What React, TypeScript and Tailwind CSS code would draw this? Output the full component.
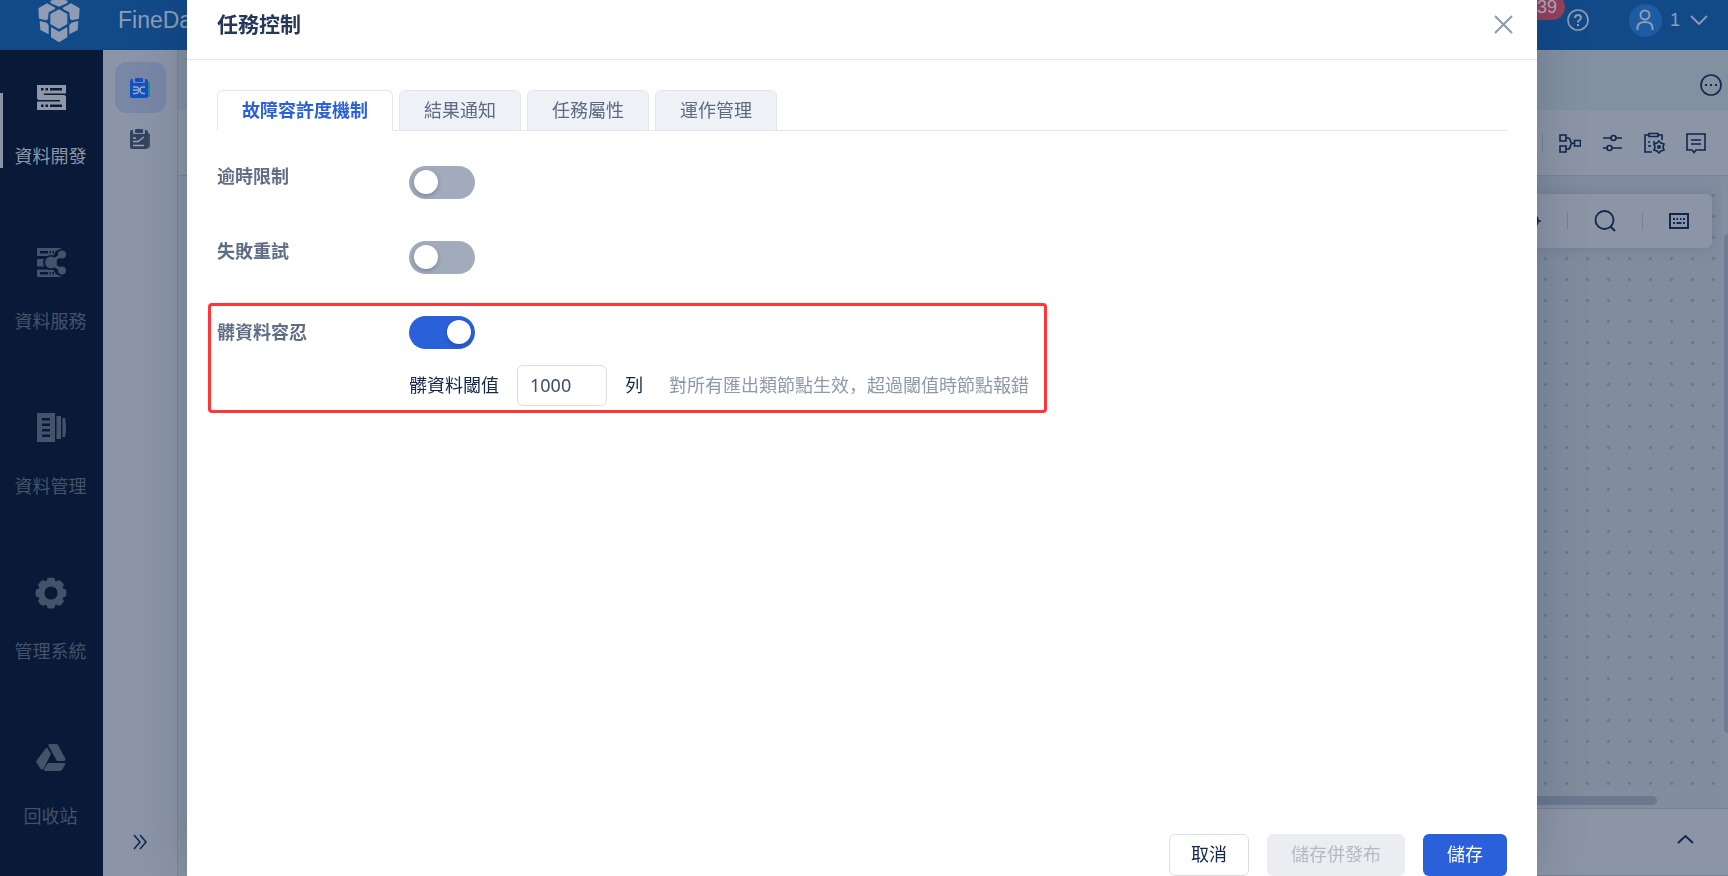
import { useState } from "react";
import type { ReactNode } from "react";
import { clsx } from "clsx";

const navItems = [
  { label: "資料開發", icon: <DevelopIcon /> },
  { label: "資料服務", icon: <ServiceIcon /> },
  { label: "資料管理", icon: <ManageIcon /> },
  { label: "管理系統", icon: <GearIcon /> },
  { label: "回收站", icon: <RecycleIcon /> },
];

const tabs = ["故障容許度機制", "結果通知", "任務屬性", "運作管理"];

function LogoIcon() {
  return (
    <svg width="42" height="46" viewBox="23 -8 126 138" fill="currentColor" className="shrink-0">
      <path d="M86 -8 113 5 110 11 86 21 62 11 59 5Z" />
      <path d="M24 26 50 11 75 24 73 29 55 38 53 58 48 62 26 57Z" />
      <path d="M148 26 122 11 97 24 99 29 117 38 119 58 124 62 146 57Z" />
      <path d="M86 29 111 43V73L86 88 60 73V43Z" />
      <path d="M28 64 49 69 55 77V104L30 91Z" />
      <path d="M144 64 123 69 117 77V104L142 91Z" />
      <path d="M62 82 86 96 111 82V113L86 128 62 113Z" />
    </svg>
  );
}

function DevelopIcon() {
  return (
    <svg width="30" height="30" viewBox="0 0 30 30" fill="currentColor" fillRule="evenodd">
      <path d="M1 2H30V10.500H8V12H28Q30 12 30 14V27H1V18.500H24V17H3Q1 17 1 15ZM5 5V7.500H7.500V5ZM9.500 5V7.500H12V5ZM14 5V7.500H26V5ZM5 21.500V24H7.500V21.500ZM9.500 21.500V24H12V21.500ZM14 21.500V24H26V21.500Z" />
    </svg>
  );
}

function ServiceIcon() {
  return (
    <svg width="30" height="30" viewBox="0 0 30 30" fill="currentColor" fillRule="evenodd">
      <path d="M1 0H26L20 3 17 8H1ZM4 3V5.500H12V3ZM13.500 3V5.500H15V3ZM16.500 3V5.500H18V3Z" />
      <path d="M1 11H8L7 15 8 18.500H1Z" />
      <path d="M1 21.500H17L20 26 26 29H1ZM4 24V26.500H12V24ZM13.500 24V26.500H15V24ZM16.500 24V26.500H18V24Z" />
      <circle cx="15" cy="14.500" r="7.500" fill="#081a37" />
      <circle cx="15" cy="14.500" r="6" />
      <circle cx="26" cy="6.500" r="4" />
      <circle cx="26" cy="22.500" r="4" />
      <path d="M15 14 26 6.500M15 15 26 22.500" stroke="currentColor" strokeWidth="3" />
    </svg>
  );
}

function ManageIcon() {
  return (
    <svg width="30" height="30" viewBox="0 0 30 30" fill="currentColor" fillRule="evenodd">
      <path d="M1 0H19V29H1ZM6 5V7.500H14V5ZM6 10.500V13H14V10.500ZM6 16V18.500H14V16ZM6 21.500V24H14V21.500Z" />
      <path d="M20.500 3H25V26H20.500ZM26.500 5H29Q31 15 29 24H26.500Z" />
    </svg>
  );
}

function GearIcon() {
  const teeth = [0, 45, 90, 135, 180, 225, 270, 315];
  return (
    <svg width="32" height="32" viewBox="0 0 32 32" fill="currentColor">
      <circle cx="16" cy="16" r="9.800" fill="none" stroke="currentColor" strokeWidth="6.400" />
      {teeth.map((deg) => (
        <path key={deg} d="M11.500 5 12.500 1Q16 0 19.500 1L20.500 5Z" transform={`rotate(${deg} 16 16)`} />
      ))}
    </svg>
  );
}

function RecycleIcon() {
  return (
    <svg width="30" height="28" viewBox="0 0 30 28" fill="currentColor">
      <path d="M12 1Q13 0 14 0H20Q21 0 22 1L29 14Q30 17 28 17H21Z" />
      <path d="M10 4Q11 3 12 5L15 10 8 24Q6 27 4 24L0 18 1 16Z" />
      <path d="M12 19H28Q30 19 29 21L26 26Q25 27 24 27H9Q8 27 8 25Z" />
    </svg>
  );
}

function TaskIcon({ active }: { active?: boolean }) {
  return (
    <svg width="20" height="20" viewBox="0 0 20 20">
      <rect x="8" y="4" width="12" height="15" rx="2" fill={active ? "#1b8c8e" : "#3b4c68"} />
      <rect x="0" y="1" width="18" height="19" rx="2" fill={active ? "#1450c0" : "#33435f"} />
      <rect x="3" y="0" width="12" height="5" rx="1" fill={active ? "#7987a7" : "#8a93a5"} />
      <rect x="5" y="0" width="8" height="4" rx="1" fill={active ? "#1450c0" : "#33435f"} />
      {active ? (
        <path d="M3 9H6Q9 9 9 12T6 15.500H3M15 9H13Q10 9 10 12T13 15.500H15M3 12H8" fill="none" stroke="#9aa9cc" strokeWidth="1.300" />
      ) : (
        <path d="M3 12.500H8L14 8M3 16.500H14M3 9H6" fill="none" stroke="#9aa3b3" strokeWidth="1.400" />
      )}
    </svg>
  );
}

function LineIcon({ children, size = 22 }: { children: ReactNode; size?: number }) {
  return (
    <svg width={size} height={size} viewBox={`0 0 ${size} ${size}`} fill="none" stroke="currentColor" strokeWidth="1.600">
      {children}
    </svg>
  );
}

function IconButton({ label, children }: { label: string; children: ReactNode }) {
  return (
    <button type="button" aria-label={label} className="flex cursor-pointer items-center justify-center">
      {children}
    </button>
  );
}

function Header() {
  return (
    <header className="relative flex h-[50px] items-center overflow-hidden bg-[#124a88] pb-[10px] pl-[38px] pr-5 text-[#8e9db5]">
      <LogoIcon />
      <span className="ml-[38px] font-[Liberation_Sans,sans-serif] text-[23px]">FineData</span>
      <div className="ml-auto flex items-center">
        <span className="mb-[26px] mr-[2px] flex h-[26px] w-14 items-center justify-end rounded-full bg-[#93415a] pr-2 font-[Liberation_Sans,sans-serif] text-lg leading-5 text-[#a9a9bb]">
          39
        </span>
        <IconButton label="幫助">
          <LineIcon size={22}>
            <circle cx="11" cy="11" r="10" />
            <path d="M8 9Q8 6 11 6T14 8.500Q14 10 12.500 11 11 12 11 13.500M11 15V17" strokeWidth="2" />
          </LineIcon>
        </IconButton>
        <button type="button" className="ml-10 flex cursor-pointer items-center">
          <span className="flex size-[33px] items-center justify-center rounded-full bg-[#1d5ca3]">
            <svg width="18" height="22" viewBox="0 0 18 22" fill="none" stroke="currentColor" strokeWidth="2">
              <circle cx="9" cy="6" r="4.500" />
              <path d="M1.500 21V19Q1.500 13 9 13T16.500 19V21" />
            </svg>
          </span>
          <span className="ml-2 font-[Liberation_Sans,sans-serif] text-lg">1</span>
          <svg width="18" height="10" viewBox="0 0 18 10" fill="none" stroke="currentColor" strokeWidth="1.800" className="ml-[10px]">
            <path d="M1 1 9 9 17 1" />
          </svg>
        </button>
      </div>
    </header>
  );
}

function Sidebar() {
  return (
    <nav className="w-[103px] shrink-0 bg-[#081a37]">
      {navItems.map((item, i) => (
        <a
          key={item.label}
          href="#"
          className={clsx(
            "relative flex h-[165px] flex-col items-center pr-[2px] pt-[33px] text-lg leading-7",
            i === 0 ? "text-[#8e97a8]" : "text-[#44526a]"
          )}
        >
          {i === 0 && <span className="absolute left-0 top-[43px] h-[75px] w-[3px] bg-[#8a93a5]" />}
          <span className="flex h-[30px] items-center">{item.icon}</span>
          <span className="mt-[29px]">{item.label}</span>
        </a>
      ))}
    </nav>
  );
}

function SubSidebar() {
  return (
    <aside className="flex w-[75px] shrink-0 flex-col items-center border-r border-[#7a8697] bg-[#8c95a7] pb-[26px] pt-3 text-[#122a52]">
      <button type="button" aria-label="資料開發" className="flex size-[51px] cursor-pointer items-center justify-center rounded-xl bg-[#7987a7]">
        <TaskIcon active />
      </button>
      <button type="button" aria-label="任務運作" className="flex size-[51px] cursor-pointer items-center justify-center">
        <TaskIcon />
      </button>
      <button type="button" aria-label="展開" className="mt-auto cursor-pointer">
        <svg width="16" height="16" viewBox="0 0 16 16" fill="none" stroke="currentColor" strokeWidth="1.600">
          <path d="M2 1 8 8 2 15M8 1 14 8 8 15" />
        </svg>
      </button>
    </aside>
  );
}

function Toolbar() {
  return (
    <div className="flex h-[66px] shrink-0 items-center justify-end gap-5 border-b border-[#798597] bg-[#8c95a6] pr-[21px]">
      <span className="mr-[-4px] h-5 w-px bg-[#758296]" />
      <IconButton label="節點">
        <LineIcon>
          <path d="M1 3H7V9H1ZM1 14H7V20H1ZM15.500 8.500H21.500V14H15.500ZM7 6H9Q11 6 11.500 9T14 11.200H15.500M7 17H9Q11 17 11.500 14T14 11.200" />
        </LineIcon>
      </IconButton>
      <IconButton label="參數">
        <LineIcon>
          <path d="M2 6H10M15 6H21M2 16H6M11 16H21" />
          <circle cx="12.500" cy="6" r="2.500" />
          <circle cx="8.500" cy="16" r="2.500" />
        </LineIcon>
      </IconButton>
      <IconButton label="任務控制">
        <LineIcon>
          <path d="M6 3H2V20H9M15 3H19V8M6 1.500H15V4.500H6ZM5 10H7M10 10H12M5 14H8" />
          <path d="M16 9 18 11 21 12 20 15 21 18 18 19 16 21 14 19 11 18 12 15 11 12 14 11Z" />
          <circle cx="16" cy="15" r="1.200" />
        </LineIcon>
      </IconButton>
      <IconButton label="備註">
        <LineIcon>
          <path d="M2 2H20V18H11L9 20.500 7 18H2ZM6 8H16M6 12H16" />
        </LineIcon>
      </IconButton>
    </div>
  );
}

function Workspace() {
  return (
    <main className="flex min-w-0 flex-1 flex-col bg-[#828e9e] text-[#102750]">
      <div className="flex h-[60px] shrink-0 items-center justify-end bg-[#8390a0] pr-[6px] pt-[10px]">
        <IconButton label="更多">
          <LineIcon>
            <circle cx="11" cy="11" r="10" />
            <path d="M5 11H7M10 11H12M15 11H17" strokeWidth="2" />
          </LineIcon>
        </IconButton>
      </div>
      <Toolbar />
      <div className="flex min-h-0 flex-1">
        {/* Component list */}
        <div className="w-60 shrink-0 bg-[#8792a2]" />
        <div className="flex min-w-0 flex-1 flex-col">
          <div className="flex min-h-0 flex-1">
            <div className="flex min-w-0 flex-1 flex-col">
              <div className="flex-1 bg-[#818c9f] bg-[radial-gradient(circle,#6b788c_1px,transparent_2px)] bg-[length:21px_21px] bg-[position:4px_9px] pl-4 pr-[9px] pt-[18px]">
                <div className="flex h-[54px] items-center justify-end gap-[26px] rounded-md bg-[#8c95a6] pr-[23px] shadow-[0_0_12px_rgba(80,98,125,0.35)]">
                  <IconButton label="定位">
                    <LineIcon>
                      <circle cx="11" cy="11" r="8" />
                      <path d="M16 11H22M11 0V6M11 16V22M0 11H6" />
                    </LineIcon>
                  </IconButton>
                  <span className="h-[18px] w-px bg-[#758296]" />
                  <IconButton label="搜尋">
                    <LineIcon>
                      <circle cx="10.500" cy="10" r="9" strokeWidth="1.800" />
                      <path d="M16.500 16.500 21 21" strokeWidth="2" />
                    </LineIcon>
                  </IconButton>
                  <span className="h-[18px] w-px bg-[#758296]" />
                  <IconButton label="快捷鍵">
                    <LineIcon size={20}>
                      <path d="M1 3H19V17H1Z" strokeWidth="2" />
                      <path d="M4 8H6M7.500 8H9M11 8H12.500M14 8H16M4 12H6M7.500 12H12.500M14 12H16" strokeWidth="2" />
                    </LineIcon>
                  </IconButton>
                </div>
              </div>
              <div className="h-[19px] pr-[64px] pt-[7px]">
                <div className="h-[9px] rounded-full bg-[#6b7890]" />
              </div>
            </div>
            <div className="flex w-[7px] justify-end bg-[#838e9f] pb-[75px] pt-[58px]">
              <div className="w-1 rounded-l bg-[#6f7c93]" />
            </div>
          </div>
          <div className="flex h-[68px] shrink-0 items-center justify-end border-y border-[#758296] bg-[#8c95a6] pb-[6px] pr-[34px]">
            <IconButton label="展開">
              <svg width="17" height="10" viewBox="0 0 17 10" fill="none" stroke="currentColor" strokeWidth="2">
                <path d="M1 9 8.500 2 16 9" />
              </svg>
            </IconButton>
          </div>
        </div>
      </div>
    </main>
  );
}

function Switch({ id, checked, onChange }: { id: string; checked: boolean; onChange: (value: boolean) => void }) {
  return (
    <span className="relative flex h-[33px] w-[66px] shrink-0">
      <input
        id={id}
        type="checkbox"
        role="switch"
        checked={checked}
        onChange={(e) => onChange(e.target.checked)}
        className="peer h-full w-full cursor-pointer appearance-none rounded-full bg-[#a2abbc] checked:bg-[#2b60db]"
      />
      <span className="pointer-events-none absolute left-[5px] top-1 size-6 rounded-full bg-white shadow-[0_2px_4px_rgba(0,30,60,0.25)] peer-checked:left-[38px]" />
    </span>
  );
}

function TaskControlDialog() {
  const [activeTab, setActiveTab] = useState(tabs[0]);
  const [timeLimit, setTimeLimit] = useState(false);
  const [retry, setRetry] = useState(false);
  const [dirty, setDirty] = useState(true);
  const [threshold, setThreshold] = useState("1000");

  return (
    <div role="dialog" aria-label="任務控制" className="flex w-full flex-col bg-white shadow-[0_0_50px_rgba(8,26,55,0.2)]">
      <div className="flex h-[60px] items-center justify-between border-b border-[#e3e6ee] pb-[10px] pl-[30px] pr-6">
        <h1 className="text-[21px] font-bold text-[#26375a]">任務控制</h1>
        <button type="button" aria-label="關閉" className="cursor-pointer text-[#8f99ab]">
          <svg width="19" height="19" viewBox="0 0 19 19" fill="none" stroke="currentColor" strokeWidth="2">
            <path d="M1 1 18 18M18 1 1 18" />
          </svg>
        </button>
      </div>

      <div className="flex-1 px-[30px] pt-[30px]">
        <div role="tablist" className="flex gap-[6px] border-b border-[#e3e6ee]">
          {tabs.map((tab) => (
            <button
              key={tab}
              type="button"
              role="tab"
              aria-selected={tab === activeTab}
              onClick={() => setActiveTab(tab)}
              className={clsx(
                "-mb-px h-[41px] cursor-pointer rounded-t-md border border-[#e3e6ee] px-6 pb-[2px] text-lg",
                tab === activeTab ? "border-b-white bg-white font-bold text-[#2b60db]" : "bg-[#eef1f6] text-[#5c6a84]"
              )}
            >
              {tab}
            </button>
          ))}
        </div>

        <div className="mt-[35px] flex h-[75px]">
          <label htmlFor="time-limit" className="w-48 text-lg leading-5 font-bold text-[#5f6d86]">逾時限制</label>
          <Switch id="time-limit" checked={timeLimit} onChange={setTimeLimit} />
        </div>
        <div className="flex h-[62px]">
          <label htmlFor="retry" className="w-48 text-lg leading-5 font-bold text-[#5f6d86]">失敗重試</label>
          <Switch id="retry" checked={retry} onChange={setRetry} />
        </div>

        {/* Dirty data tolerance */}
        <div className="-ml-[9px] h-[110px] w-[839px] rounded-[4px] border-3 border-[#fd3636] pl-[6px] pt-[10px]">
          <div className="flex items-center">
            <label htmlFor="dirty" className="w-48 pb-[2px] text-lg font-bold text-[#5f6d86]">髒資料容忍</label>
            <Switch id="dirty" checked={dirty} onChange={setDirty} />
          </div>
          <div className="ml-48 mt-4 flex items-center text-lg text-[#102750]">
            <label htmlFor="threshold" className="pb-[2px]">髒資料閾值</label>
            <input
              id="threshold"
              type="text"
              value={threshold}
              onChange={(e) => setThreshold(e.target.value)}
              className="ml-[18px] h-[41px] w-[90px] rounded-md border border-[#dadee7] px-3 pb-[2px] text-[#3d4d6b]"
            />
            <span className="ml-[18px] pb-[2px]">列</span>
            <span className="ml-[26px] pb-[2px] text-[#8f99ab]">對所有匯出類節點生效，超過閾值時節點報錯</span>
          </div>
        </div>
      </div>

      <div className="flex justify-end gap-[18px] px-[30px] text-lg">
        <button type="button" className="h-[42px] w-20 cursor-pointer rounded-md border border-[#d9dee7] pb-[2px] text-[#102750]">
          取消
        </button>
        <button type="button" disabled className="h-[42px] w-[138px] rounded-md bg-[#ecedf1] pb-[2px] text-[#b4bac6]">
          儲存併發布
        </button>
        <button type="button" className="h-[42px] w-[84px] cursor-pointer rounded-md bg-[#2b60db] pb-[2px] text-white">
          儲存
        </button>
      </div>
    </div>
  );
}

export default function App() {
  return (
    <div className="relative flex h-screen flex-col overflow-hidden font-['Noto_Sans','Noto_Sans_CJK_SC',sans-serif]">
      <Header />
      <div className="flex min-h-0 flex-1">
        <Sidebar />
        <SubSidebar />
        <Workspace />
      </div>
      <div className="fixed inset-0 flex pl-[187px] pr-[191px]">
        <TaskControlDialog />
      </div>
    </div>
  );
}
